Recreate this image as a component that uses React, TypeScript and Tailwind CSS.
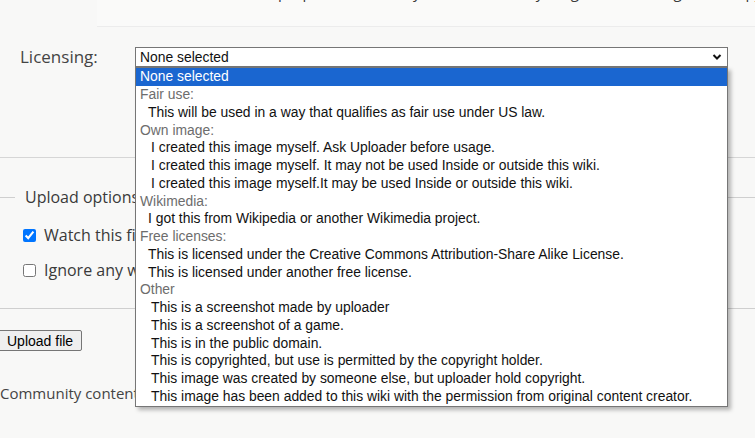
const groups: { label: string; indent: string; items: string[] }[] = [
  {
    label: 'Fair use:',
    indent: 'pl-[12px]',
    items: ['This will be used in a way that qualifies as fair use under US law.'],
  },
  {
    label: 'Own image:',
    indent: 'pl-[15px]',
    items: [
      'I created this image myself. Ask Uploader before usage.',
      'I created this image myself. It may not be used Inside or outside this wiki.',
      'I created this image myself.It may be used Inside or outside this wiki.',
    ],
  },
  {
    label: 'Wikimedia:',
    indent: 'pl-[12px]',
    items: ['I got this from Wikipedia or another Wikimedia project.'],
  },
  {
    label: 'Free licenses:',
    indent: 'pl-[12px]',
    items: [
      'This is licensed under the Creative Commons Attribution-Share Alike License.',
      'This is licensed under another free license.',
    ],
  },
  {
    label: 'Other',
    indent: 'pl-[15px]',
    items: [
      'This is a screenshot made by uploader',
      'This is a screenshot of a game.',
      'This is in the public domain.',
      'This is copyrighted, but use is permitted by the copyright holder.',
      'This image was created by someone else, but uploader hold copyright.',
      'This image has been added to this wiki with the permission from original content creator.',
    ],
  },
];

const pageFont = "font-['Open_Sans','Lato',sans-serif]";
const arial = "font-['Liberation_Sans',Arial,sans-serif]";

function Dropdown() {
  return (
    <div
      className={`absolute left-[135px] top-[67px] w-[593px] bg-white border border-[#767676] shadow-[3px_3px_4px_rgba(0,0,0,0.28)] text-[13.88px] leading-[17.75px] ${arial}`}
    >
      <div className="h-[18px] pl-[4px] bg-[#1a66d0] text-white">None selected</div>
      {groups.map((g) => (
        <div key={g.label}>
          <div className="pl-[4px] text-[#6d6d6d]">{g.label}</div>
          {g.items.map((item) => (
            <div key={item} className={`${g.indent} text-[#111]`}>
              {item}
            </div>
          ))}
        </div>
      ))}
    </div>
  );
}

export default function App() {
  return (
    <div className={`relative w-[755px] h-[438px] overflow-hidden bg-[#f8f8f7] text-[#3a3a3a] ${pageFont}`}>
      <div className="ml-[97px] h-[27px] border-b border-[#ececec] bg-[#fafaf9] overflow-hidden">
        <p className="-mt-[19px] ml-[40px] text-[15px] leading-[22px] whitespace-nowrap">
          Describe the file, its purpose, how it may be used, and anything about the origin and copyright of it, pages using imaging
        </p>
      </div>

      <div className="mt-[19px] flex items-center">
        <span className="w-[135px] pl-[20px] text-[17px] leading-[22px] text-[#444]">Licensing:</span>
        <div
          className={`w-[593px] h-[20px] flex items-center justify-between bg-white border border-[#767676] pl-[4px] pr-[4px] text-[13.88px] text-[#111] ${arial}`}
        >
          <span>None selected</span>
          <svg width="10" height="8" viewBox="0 0 10 8" className="mr-[1px]">
            <polyline points="1.5,2 5,5.5 8.5,2" fill="none" stroke="#111" strokeWidth="2" />
          </svg>
        </div>
      </div>

      <div className="mt-[89px] border-t border-[#d6d6d6]" />

      <fieldset className="mt-[29px] -mx-[16px] h-[122px] border border-[#cfcfcf] pl-[30px] pr-4">
        <legend className="px-[10px] text-[16px] leading-[20px]">Upload options</legend>
        <label className="mt-[16px] ml-[8px] flex items-center gap-[8px] text-[16px]">
          <input type="checkbox" defaultChecked className="w-[13px] h-[13px] accent-[#0075ff]" />
          <span>Watch this file</span>
        </label>
        <label className="mt-[11px] ml-[8px] flex items-center gap-[8px] text-[16px]">
          <input type="checkbox" className="w-[13px] h-[13px]" />
          <span>Ignore any warnings</span>
        </label>
      </fieldset>

      <button
        className={`mt-[21px] -ml-[2px] h-[21px] px-[8px] bg-[#efefef] border border-[#767676] rounded-[2px] text-[14px] text-black ${arial}`}
      >
        Upload file
      </button>

      <p className="mt-[30px] text-[15px] text-[#444]">Community content is available under CC-BY-SA unless otherwise noted.</p>

      <Dropdown />
    </div>
  );
}
